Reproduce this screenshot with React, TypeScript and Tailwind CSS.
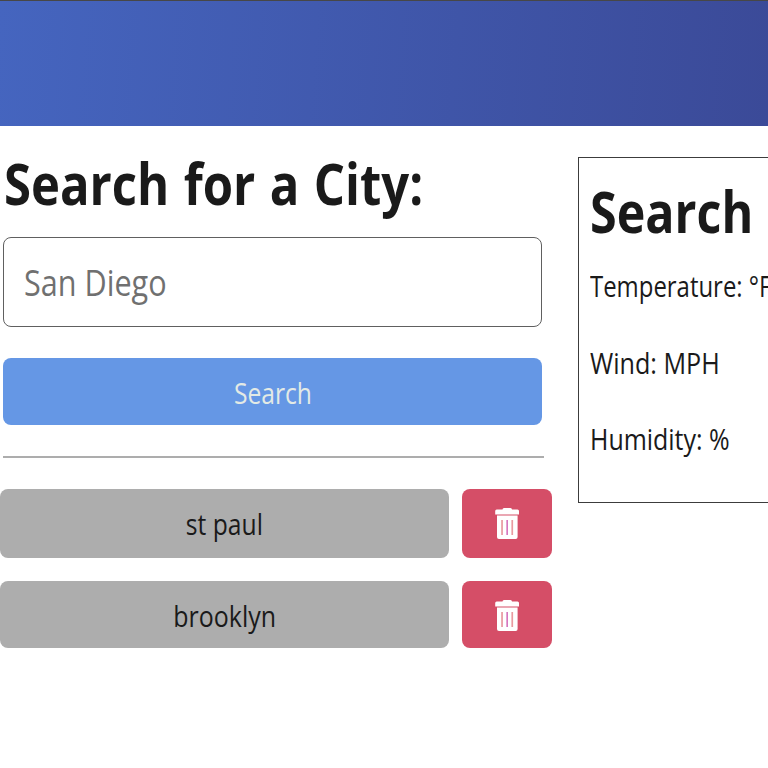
import React from "react";

const cities = [
  { name: "st paul", row: "h-[69px] mb-[23px]", text: "scale-x-[0.85]", pad: "pt-0 pr-px", icon: "pt-0" },
  { name: "brooklyn", row: "h-[67px]", text: "scale-x-[0.86]", pad: "pt-[2px] pl-px", icon: "pt-[2px]" },
];

function TrashIcon() {
  return (
    <svg width="26" height="32" viewBox="0 0 26 32" fill="#fff" aria-hidden="true">
      <path d="M8.5 1.5Q8.5 0 10 0H16.5Q18 0 18 1.5H23.5Q25 1.5 25 3V6.4H1.2V3Q1.2 1.5 2.7 1.5Z" />
      <path d="M3 7.6H23.6V29Q23.6 31 21.6 31H5Q3 31 3 29Z" />
      <g fill="#e99aa0">
        <rect x="7.2" y="12" width="1.7" height="15" />
        <rect x="12.4" y="12" width="1.5" height="15" fill="#d269b8" />
        <rect x="17.4" y="12" width="1.7" height="15" />
      </g>
    </svg>
  );
}

export default function App() {
  return (
    <div className="h-[768px] w-full overflow-hidden bg-white font-['Open_Sans','Noto_Sans',sans-serif] text-[#1a1a1a]">
      <header className="h-[126px] border-t border-[#474747] bg-linear-[94deg,#4565bf,#3b4a98]" />
      <main className="flex">
        <section className="w-[552px] shrink-0 pt-[27px]">
          <div className="pl-[3px]">
            <h1 className="mb-6 ml-px h-[60px] origin-left scale-x-[0.86] whitespace-nowrap text-[57px] leading-[60px] font-bold [word-spacing:2px]">Search for a City:</h1>
            <div className="h-[90px] w-[539px] overflow-hidden rounded-[8px] border border-[#606060] bg-white pt-px pl-5">
              <input
                placeholder="San Diego"
                aria-label="City"
                className="block h-[86px] w-[580px] origin-left scale-x-[0.85] text-[36px] text-[#1a1a1a] outline-none placeholder:text-[#707070]"
              />
            </div>
            <button className="mt-[31px] block h-[67px] w-[539px] rounded-[8px] bg-[#6597e5] pt-[2px] text-[29px] leading-10 text-[#e3eae5]">
              <span className="inline-block scale-x-[0.85]">Search</span>
            </button>
            <hr className="mt-[31px] mb-[31px] h-[2px] w-[541px] border-0 bg-[#adadad]" />
          </div>
          {cities.map((city) => (
            <div key={city.name} className={"flex gap-[13px] " + city.row}>
              <button className={"w-[449px] rounded-[8px] bg-[#adadad] text-[29px] leading-10 " + city.pad}>
                <span className={"inline-block " + city.text}>{city.name}</span>
              </button>
              <button aria-label="Delete" className={"flex w-[90px] items-center justify-center rounded-[8px] bg-[#d54e67] " + city.icon}>
                <TrashIcon />
              </button>
            </div>
          ))}
        </section>
        <section className="mt-[31px] ml-[26px] h-[346px] w-[400px] shrink-0 border border-[#3c3c3c] pt-[23px] pl-[11px]">
          <h2 className="mb-6 h-[60px] origin-left scale-x-[0.85] text-[57px] leading-[60px] font-bold">Search</h2>
          <p className="mb-[37px] h-10 origin-left scale-x-[0.825] text-[29px] leading-[42px]">Temperature: °F</p>
          <p className="mb-[36px] h-10 origin-left scale-x-[0.867] text-[29px] leading-[42px]">Wind: MPH</p>
          <p className="h-10 origin-left scale-x-[0.86] text-[29px] leading-[42px]">Humidity: %</p>
        </section>
      </main>
    </div>
  );
}
